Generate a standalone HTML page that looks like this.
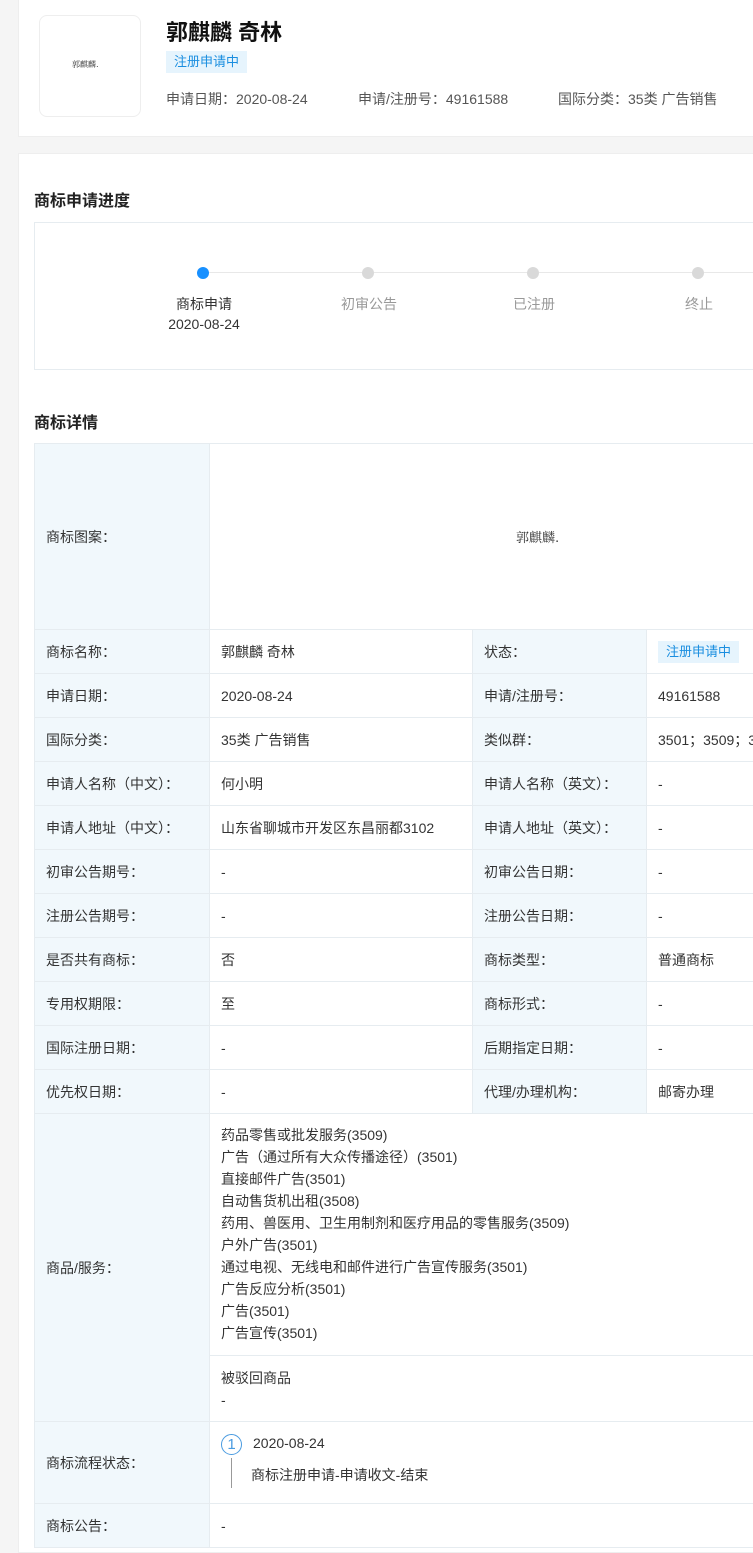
<!DOCTYPE html>
<html><head><meta charset="utf-8"><style>
*{margin:0;padding:0;box-sizing:border-box}
body{width:753px;height:1544px;overflow:hidden;background:#f5f5f5;font-family:"Liberation Sans","Noto Sans CJK SC",sans-serif;color:#333;font-size:14px;position:relative}
.a{position:absolute;white-space:nowrap}
.card{position:absolute;background:#fff;border:1px solid #eee}
table{position:absolute;left:34px;top:443px;border-collapse:collapse;width:760px;table-layout:fixed}
td{border:1px solid #e6ecf0;padding:0 11px;height:44px;font-size:14px;color:#333}
td.l{background:#f1f8fc}
.tag{display:inline-block;background:#e6f4fd;color:#1a8ee0;font-size:13px;padding:0 8px;line-height:22px}
.dot{position:absolute;width:12px;height:12px;border-radius:50%;background:#d9d9d9;top:267px}
.sl{position:absolute;font-size:14px;color:#999;text-align:center;width:100px}
</style></head><body>
<div class="card" style="left:18px;top:-1px;width:760px;height:138px"></div>
<div class="card" style="left:39px;top:15px;width:102px;height:102px;border-radius:8px;border-color:#eee"></div>
<div class="a" style="left:72px;top:59px;font-size:8px;font-family:'Noto Serif CJK SC',serif">郭麒麟.</div>
<div class="a" style="left:166px;top:15px;font-size:22px;font-weight:bold;color:#111">郭麒麟 奇林</div>
<div class="a tag" style="left:166px;top:51px">注册申请中</div>
<div class="a" style="left:166px;top:89px;color:#555">申请日期：2020-08-24</div>
<div class="a" style="left:358px;top:89px;color:#555">申请/注册号：49161588</div>
<div class="a" style="left:558px;top:89px;color:#555">国际分类：35类 广告销售</div>

<div class="card" style="left:18px;top:153px;width:760px;height:1400px"></div>
<div class="a" style="left:34px;top:187px;font-size:16px;font-weight:bold;color:#222">商标申请进度</div>
<div class="card" style="left:34px;top:222px;width:740px;height:148px;border-color:#e6ecf0"></div>
<div class="a" style="left:209px;top:272px;width:544px;height:1px;background:#e8e8e8"></div>
<div class="dot" style="left:197px;background:#1890ff"></div>
<div class="dot" style="left:362px"></div>
<div class="dot" style="left:527px"></div>
<div class="dot" style="left:692px"></div>
<div class="sl" style="left:154px;top:294px;color:#333">商标申请</div>
<div class="sl" style="left:154px;top:316px;color:#333">2020-08-24</div>
<div class="sl" style="left:319px;top:294px">初审公告</div>
<div class="sl" style="left:484px;top:294px">已注册</div>
<div class="sl" style="left:649px;top:294px">终止</div>
<div class="a" style="left:34px;top:409px;font-size:16px;font-weight:bold;color:#222">商标详情</div>

<table>
<colgroup><col style="width:175px"><col style="width:263px"><col style="width:174px"><col style="width:148px"></colgroup>
<tr><td class="l" style="height:186px">商标图案：</td><td colspan="3" style="padding-left:306px;font-family:'Noto Serif CJK SC',serif;font-size:13px">郭麒麟.</td></tr>
<tr><td class="l">商标名称：</td><td>郭麒麟 奇林</td><td class="l">状态：</td><td><span class="tag">注册申请中</span></td></tr>
<tr><td class="l">申请日期：</td><td>2020-08-24</td><td class="l">申请/注册号：</td><td>49161588</td></tr>
<tr><td class="l">国际分类：</td><td>35类 广告销售</td><td class="l">类似群：</td><td style="white-space:nowrap;overflow:hidden">3501；3509；3508</td></tr>
<tr><td class="l">申请人名称（中文）：</td><td>何小明</td><td class="l">申请人名称（英文）：</td><td>-</td></tr>
<tr><td class="l">申请人地址（中文）：</td><td>山东省聊城市开发区东昌丽都3102</td><td class="l">申请人地址（英文）：</td><td>-</td></tr>
<tr><td class="l">初审公告期号：</td><td>-</td><td class="l">初审公告日期：</td><td>-</td></tr>
<tr><td class="l">注册公告期号：</td><td>-</td><td class="l">注册公告日期：</td><td>-</td></tr>
<tr><td class="l">是否共有商标：</td><td>否</td><td class="l">商标类型：</td><td>普通商标</td></tr>
<tr><td class="l">专用权期限：</td><td>至</td><td class="l">商标形式：</td><td>-</td></tr>
<tr><td class="l">国际注册日期：</td><td>-</td><td class="l">后期指定日期：</td><td>-</td></tr>
<tr><td class="l">优先权日期：</td><td>-</td><td class="l">代理/办理机构：</td><td>邮寄办理</td></tr>
<tr><td class="l" rowspan="2">商品/服务：</td><td colspan="3" style="height:242px;line-height:22px;vertical-align:top;padding-top:10px;white-space:nowrap">药品零售或批发服务(3509)<br>广告（通过所有大众传播途径）(3501)<br>直接邮件广告(3501)<br>自动售货机出租(3508)<br>药用、兽医用、卫生用制剂和医疗用品的零售服务(3509)<br>户外广告(3501)<br>通过电视、无线电和邮件进行广告宣传服务(3501)<br>广告反应分析(3501)<br>广告(3501)<br>广告宣传(3501)</td></tr>
<tr><td colspan="3" style="height:66px;line-height:22px">被驳回商品<br>-</td></tr>
<tr><td class="l" style="height:82px">商标流程状态：</td><td colspan="3" style="position:relative">
<div class="a" style="left:11px;top:12px;width:21px;height:21px;border:1px solid #4a9be0;border-radius:50%;color:#4a9be0;text-align:center;line-height:19px;font-size:15px">1</div>
<div class="a" style="left:43px;top:13px">2020-08-24</div>
<div class="a" style="left:21px;top:36px;width:1px;height:30px;background:#999"></div>
<div class="a" style="left:41px;top:43px">商标注册申请-申请收文-结束</div></td></tr>
<tr><td class="l">商标公告：</td><td colspan="3">-</td></tr>
</table>
</body></html>
